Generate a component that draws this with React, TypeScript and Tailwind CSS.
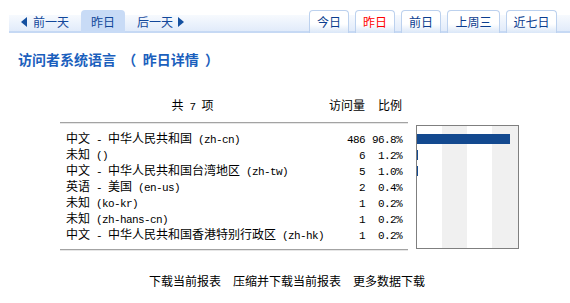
const rows: [string, number, string, number][] = [
  ["中文 - 中华人民共和国 (zh-cn)", 486, "96.8%", 96.8],
  ["未知 ()", 6, "1.2%", 1.2],
  ["中文 - 中华人民共和国台湾地区 (zh-tw)", 5, "1.0%", 1.0],
  ["英语 - 美国 (en-us)", 2, "0.4%", 0.4],
  ["未知 (ko-kr)", 1, "0.2%", 0.2],
  ["未知 (zh-hans-cn)", 1, "0.2%", 0.2],
  ["中文 - 中华人民共和国香港特别行政区 (zh-hk)", 1, "0.2%", 0.2],
];

const tabs = [
  { label: "今日", w: "w-[40px]" },
  { label: "昨日", w: "w-[40px]", active: true },
  { label: "前日", w: "w-[40px]" },
  { label: "上周三", w: "w-[53px]" },
  { label: "近七日", w: "w-[51px]" },
];

// latin runs get a half-width mono face, like the old bitmap song font
function Mixed({ text }: { text: string }) {
  const parts = text.split(/([\u0000-\u00ff]+)/).filter(Boolean);
  return (
    <>
      {parts.map((p, i) =>
        /^[\u0000-\u00ff]+$/.test(p) ? (
          <span key={i} className="font-['Liberation_Mono',monospace] text-[11px] tracking-[-0.6px] whitespace-pre">{p}</span>
        ) : (
          <span key={i}>{p}</span>
        )
      )}
    </>
  );
}

function Arrow({ dir }: { dir: "left" | "right" }) {
  return (
    <svg width="6" height="10" viewBox="0 0 6 10" className="shrink-0">
      {dir === "left" ? <polygon points="6,0 6,10 0,5" fill="#1450a0" /> : <polygon points="0,0 0,10 6,5" fill="#1450a0" />}
    </svg>
  );
}

export default function App() {
  return (
    <div className="w-[570px] h-[303px] bg-white overflow-hidden font-['Noto_Sans_CJK_SC',sans-serif] text-[12px] text-black">
      {/* tab strip */}
      <div className="mt-[10px] ml-[9px] h-[23px] flex justify-between bg-[linear-gradient(to_bottom,#ffffff_0px,#ffffff_5px,#f7fafe_5px,#e1ebfa_21px,#c6d9f4_21px,#c6d9f4_23px)]">
        <div className="flex items-center pl-[12px] text-[#12479a] leading-[12px]">
          <Arrow dir="left" />
          <span className="ml-[6px]">前一天</span>
          <div className="ml-[12px] w-[44px] h-full rounded-t-[4px] bg-[#c8dbf6] flex items-center justify-center">昨日</div>
          <span className="ml-[12px]">后一天</span>
          <span className="ml-[5px] flex"><Arrow dir="right" /></span>
        </div>
        <div className="flex gap-[6px] pr-[13px]">
          {tabs.map((t) => (
            <div
              key={t.label}
              className={`${t.w} h-full border border-b-0 border-[#bcd1ee] rounded-t-[4px] bg-[linear-gradient(to_bottom,#ffffff_0px,#ffffff_13px,#d6e4f7_23px)] flex items-center justify-center pb-[1px] ${t.active ? "text-[#ff0000]" : "text-[#0b3d8f]"}`}
            >
              {t.label}
            </div>
          ))}
        </div>
      </div>

      {/* title */}
      <div className="mt-[18px] ml-[18px] h-[16px] leading-[16px] text-[14px] font-bold text-[#1b5fbd] whitespace-pre">
        访问者系统语言  （  昨日详情  ）
      </div>

      {/* table + chart */}
      <div className="mt-[30px] flex items-start">
        <div className="ml-[60px] w-[348px]">
          <div className="flex h-[16px] leading-[16px]">
            <div className="w-[265px] text-center"><Mixed text="共 7 项" /></div>
            <div className="w-[40px] text-right">访问量</div>
            <div className="flex-1 text-right pr-[6px]">比例</div>
          </div>
          <div className="mt-[9px] h-[1px] bg-[#a3a3a3]" />
          <div className="h-[1px] bg-[#e6e6e6]" />
          <div className="mt-[6px]">
            {rows.map(([name, count, pct]) => (
              <div key={name} className="flex h-[16px] leading-[16px]">
                <div className="w-[265px] pl-[6px] whitespace-nowrap"><Mixed text={name} /></div>
                <div className="w-[40px] text-right"><Mixed text={String(count)} /></div>
                <div className="flex-1 text-right pr-[6px]"><Mixed text={pct} /></div>
              </div>
            ))}
          </div>
          <div className="mt-[7px] h-[1px] bg-[#a3a3a3]" />
          <div className="h-[1px] bg-[#e6e6e6]" />
        </div>

        <div className="ml-[8px] mt-[28px] w-[103px] border border-[#7f7f7f] pt-[5px] pb-[5px] bg-[linear-gradient(to_right,#ffffff_0px,#ffffff_25px,#f0f0f0_25px,#f0f0f0_50px,#ffffff_50px,#ffffff_75px,#f0f0f0_75px,#f0f0f0_101px)]">
          {rows.map(([name, , , v]) => (
            <div key={name} className="h-[16px] flex items-center">
              <div className="h-[10px] bg-[#13498f]" style={{ width: `${Math.round((v / 100) * 96)}px` }} />
            </div>
          ))}
        </div>
      </div>

      {/* footer links */}
      <div className="mt-[22px] flex justify-center gap-[12px] leading-[16px] pl-[4px]">
        <span>下载当前报表</span>
        <span>压缩并下载当前报表</span>
        <span>更多数据下载</span>
      </div>
    </div>
  );
}
